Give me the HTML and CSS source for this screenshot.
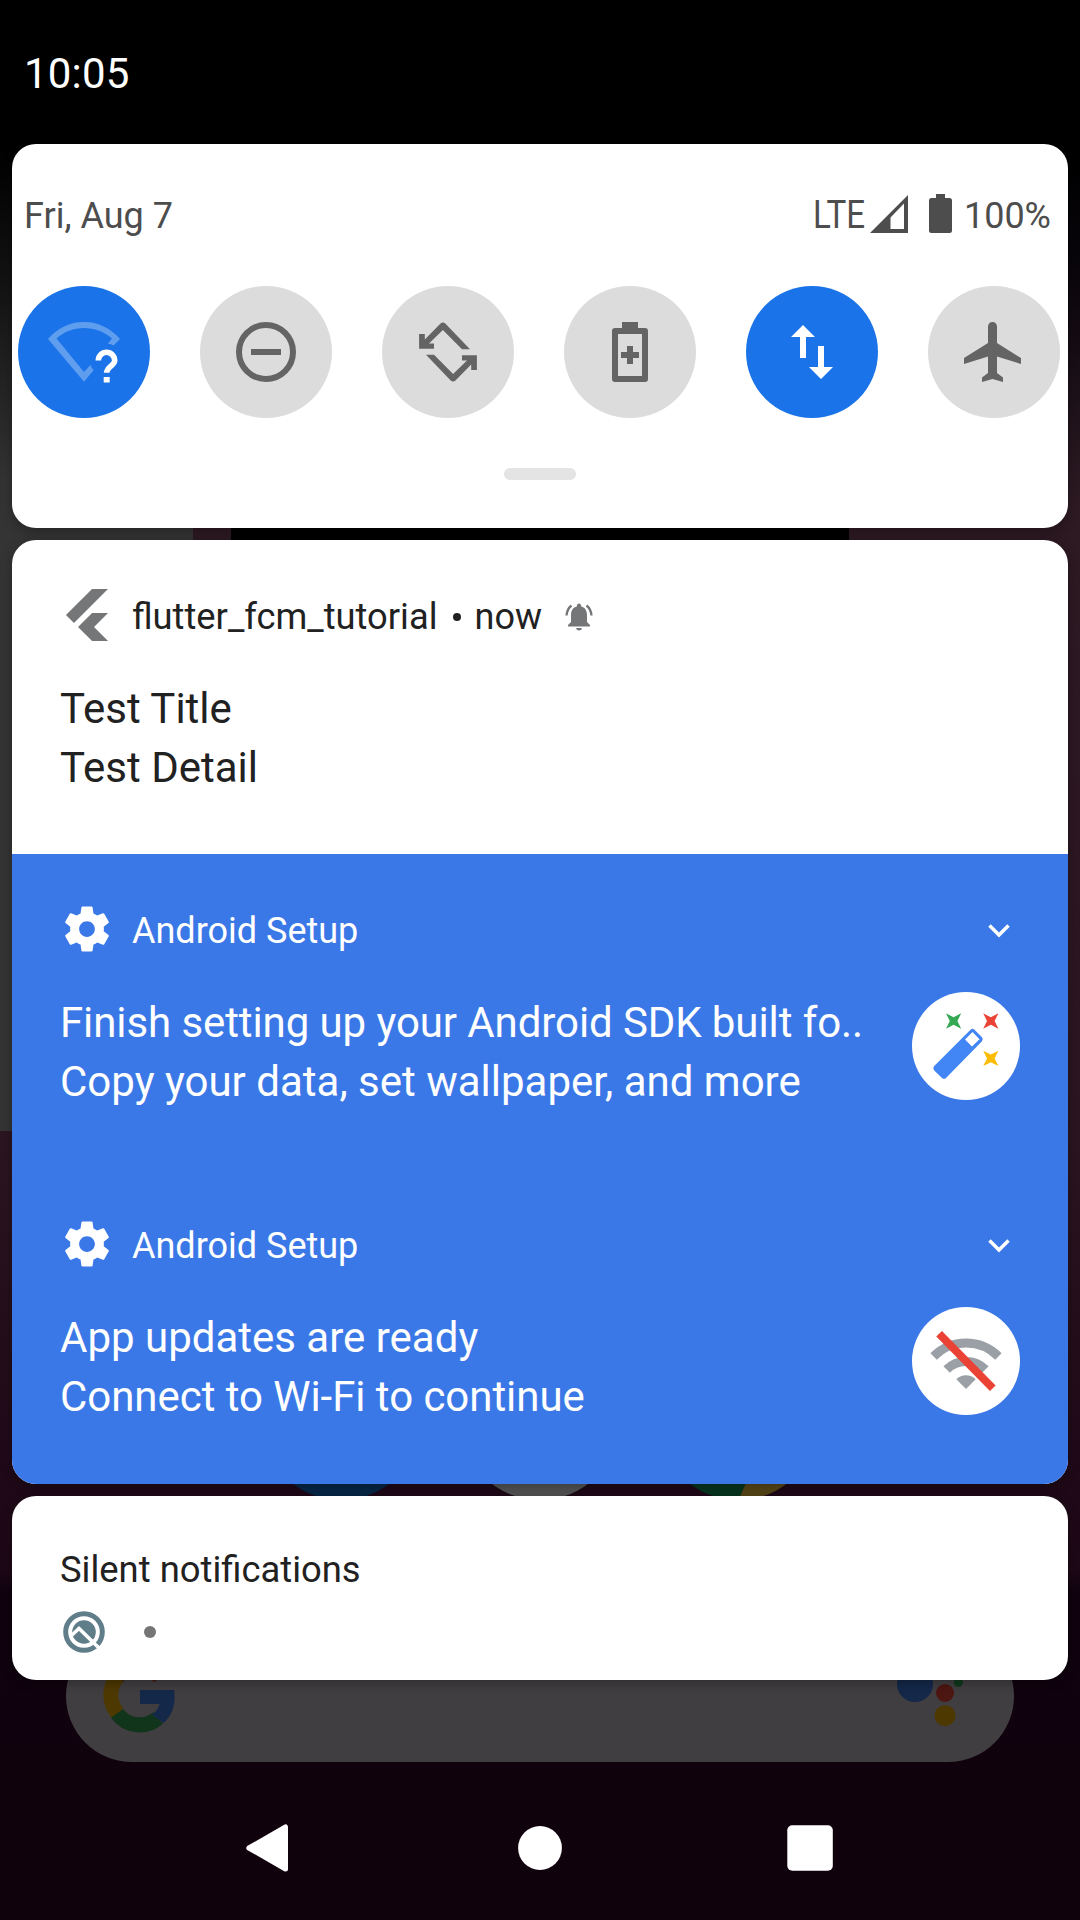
FILE: index.html
```
<!DOCTYPE html>
<html lang="en">
<head>
<meta charset="utf-8">
<title>Notifications</title>
<link rel="stylesheet" href="styles.css">
</head>
<body>
<div class="phone">
  <svg class="wallpaper" viewBox="0 0 1080 1920" aria-hidden="true">
    <defs>
      <linearGradient id="night" x1="0" y1="0" x2="0" y2="1920" gradientUnits="userSpaceOnUse">
        <stop offset="0.075" stop-color="#000"/>
        <stop offset="0.135" stop-color="#08050a"/>
        <stop offset="0.26" stop-color="#2d1a23"/>
        <stop offset="0.59" stop-color="#2b1520"/>
        <stop offset="0.77" stop-color="#1f0918"/>
        <stop offset="0.818" stop-color="#1d0816"/>
        <stop offset="0.83" stop-color="#10030f"/>
        <stop offset="1" stop-color="#0f020c"/>
      </linearGradient>
      <linearGradient id="panel" x1="0" y1="144" x2="0" y2="540" gradientUnits="userSpaceOnUse">
        <stop offset="0" stop-color="#000"/>
        <stop offset="0.35" stop-color="#131313"/>
        <stop offset="0.85" stop-color="#333"/>
        <stop offset="1" stop-color="#343434"/>
      </linearGradient>
    </defs>
    <rect width="1080" height="1920" fill="url(#night)"/>
    <rect y="144" width="193" height="987" fill="url(#panel)"/>
    <rect x="231" y="144" width="618" height="987" fill="#000"/>
    <circle cx="341" cy="1420" r="80" fill="#082748"/>
    <circle cx="540" cy="1420" r="80" fill="#545454"/>
    <circle cx="738" cy="1420" r="80" fill="#063620"/>
    <path d="M745.6 1484L738.5 1500A80 80 0 0 0 790 1481Z" fill="#594719"/>
    <rect x="66" y="1630" width="948" height="132" rx="66" fill="#413e41"/>
    <g fill="none" stroke-width="15">
      <path d="M117.2 1676.5A28 28 0 0 1 160 1677.5" stroke="#4c1611"/>
      <path d="M117.8 1713.5A28 28 0 0 1 117.8 1676.5" stroke="#4d3900"/>
      <path d="M158 1718A28 28 0 0 1 117 1713.3" stroke="#11351b"/>
    </g>
    <path d="M140 1690H174C176 1703 173 1715 163.5 1723L152 1714.5Q158 1710.500 159.500 1704H140Z" fill="#14284a"/>
    <circle cx="915" cy="1684" r="18" fill="#14284a"/>
    <circle cx="945" cy="1693" r="9" fill="#4d1611"/>
    <circle cx="945" cy="1715.700" r="10.500" fill="#4d3900"/>
    <circle cx="958.400" cy="1682.500" r="4.500" fill="#10381c"/>
  </svg>

  <header class="status-bar"><time>10:05</time></header>

  <main class="shade">
    <section class="card quick-settings">
      <div class="info-row">
        <span class="date">Fri, Aug 7</span>
        <span class="system-icons">
          <svg class="lte" viewBox="0 0 56 48"><text x="2" y="36" textLength="52" lengthAdjust="spacingAndGlyphs">LTE</text></svg>
          <svg class="signal" viewBox="0 0 38 38"><path fill-rule="evenodd" d="M0 38L38 0V38ZM20.500 22.500V34H34V8.500Z"/></svg>
          <svg class="battery" viewBox="0 0 23 39"><path d="M7 0H16V4H20.500Q23 4 23 6.500V36.500Q23 39 20.500 39H2.500Q0 39 0 36.500V6.500Q0 4 2.500 4H7Z"/></svg>
          <span class="percent">100%</span>
        </span>
      </div>
      <div class="tiles">
        <div class="tile on"><svg viewBox="0 0 72 72">
          <path opacity=".3" d="M0 23C9.500 12 22 6 36 6S62.500 12 72 23L65.500 29.500Q63 28 59.800 27.800L64 22.500C56 15.500 46.500 12 36 12S16.500 15.500 8.500 22.500L36 56L42.700 48.700Q43 52 45.700 54L36 65.700Z"/>
          <path d="M50.300 44.500A8.200 8.200 0 0 1 66.700 44.500C66.700 49.500 58.700 51 58.700 56.700" fill="none" stroke="#fff" stroke-width="5.600"/><rect x="55.700" y="61" width="6" height="5.500"/>
        </svg></div>
        <div class="tile"><svg viewBox="0 0 24 24"><circle cx="12" cy="12" r="9" fill="none" stroke="#646464" stroke-width="2"/><path d="M7 11h10v2H7z"/></svg></div>
        <div class="tile"><svg viewBox="0 0 72 72"><path id="turn" d="M28.500 7.600Q30.900 5.400 33.300 7.600L58 33.300H50L30.900 14L17 27.500H22V32.700H7.100V18H12.800V23.500Z"/><use href="#turn" transform="rotate(180 36 36)"/></svg></div>
        <div class="tile"><svg viewBox="0 0 72 72"><path fill-rule="evenodd" d="M28 6H44V12H51Q54 12 54 15V63Q54 66 51 66H21Q18 66 18 63V15Q18 12 21 12H28ZM24 18V60H48V18ZM33 30H39V36H45V42H39V48H33V42H27V36H33Z"/></svg></div>
        <div class="tile on"><svg viewBox="0 0 72 72"><path id="arrow" d="M27 9L39 21H30V42H24V21H15Z"/><use href="#arrow" transform="rotate(180 36 36)"/></svg></div>
        <div class="tile"><svg viewBox="0 0 24 24"><path d="M21 16v-2l-8-5V3.500C13 2.670 12.330 2 11.500 2S10 2.670 10 3.500V9l-8 5v2l8-2.500V19l-2 1.500V22l3.500-1 3.500 1v-1.500L13 19v-5.500l8 2.500z"/></svg></div>
      </div>
      <div class="handle"></div>
    </section>

    <section class="card notifications">
      <article class="notification">
        <div class="app-line">
          <svg class="app-icon flutter" viewBox="0 0 24 24"><path d="M14.314 0L2.300 12 6 15.700 21.684.013h-7.357zM14.328 11.072L7.857 17.530l6.470 6.470H21.700l-6.460-6.468 6.460-6.460h-7.370z"/></svg>
          <span class="app-name wide">flutter_fcm_tutorial</span>
          <span class="dot"></span>
          <span class="when">now</span>
          <svg class="bell" viewBox="0 0 28 28"><path d="M14 .5Q16.200.5 16.200 3.500C20.500 4.500 22 8 22 12.500V19L25 22V23.500H3V22L6 19V12.500C6 8 7.500 4.500 11.800 3.500Q11.800.5 14 .5ZM11 25H17Q16.500 27.500 14 27.500T11 25Z"/><path d="M6.500 2.500Q2 6 1.500 12.500M21.500 2.500Q26 6 26.500 12.500" fill="none" stroke="#757678" stroke-width="2.300"/></svg>
        </div>
        <div class="body-line"><div class="message"><p>Test Title</p><p>Test Detail</p></div></div>
      </article>

      <article class="notification setup">
        <div class="app-line">
          <svg class="app-icon" viewBox="0 0 24 24"><path id="gear" d="M19.430 12.980c.04-.32.07-.64.07-.98s-.03-.66-.07-.98l2.110-1.650c.19-.15.24-.42.12-.64l-2-3.460c-.12-.22-.39-.3-.61-.22l-2.490 1c-.52-.4-1.080-.73-1.690-.98l-.38-2.650C14.460 2.180 14.250 2 14 2h-4c-.25 0-.46.18-.49.42l-.38 2.650c-.61.25-1.170.59-1.690.98l-2.490-1c-.23-.09-.49 0-.61.22l-2 3.460c-.13.22-.07.49.12.64l2.110 1.650c-.04.32-.07.65-.07.98s.03.66.07.98l-2.110 1.650c-.19.15-.24.42-.12.64l2 3.460c.12.22.39.3.61.22l2.490-1c.52.4 1.080.73 1.690.98l.38 2.650c.03.24.24.42.49.42h4c.25 0 .46-.18.49-.42l.38-2.650c.61-.25 1.170-.59 1.690-.98l2.490 1c.23.09.49 0 .61-.22l2-3.460c.12-.22.07-.49-.12-.64l-2.110-1.650zM12 15.500c-1.930 0-3.500-1.570-3.500-3.500s1.570-3.500 3.500-3.500 3.500 1.570 3.500 3.500-1.570 3.500-3.500 3.500z"/></svg>
          <span class="app-name">Android Setup</span>
          <svg class="chevron" viewBox="0 0 22 14"><path d="M1.500 1.500L11 11L20.500 1.500"/></svg>
        </div>
        <div class="body-line">
          <div class="message"><p class="clipped">Finish setting up your Android SDK built fo..</p><p>Copy your data, set wallpaper, and more</p></div>
          <svg class="badge" viewBox="0 0 108 108"><circle cx="54" cy="54" r="54" fill="#fff"/>
            <path id="spark" d="M34 21.300L41.600 25.200L49.200 21.300L45.400 29L49.200 36.700L41.600 32.800L34 36.700L37.800 29Z" fill="#34a853"/>
            <path d="M71.200 21.300L78.800 25.200L86.400 21.300L82.600 29L86.400 36.700L78.800 32.800L71.200 36.700L75 29Z" fill="#ea4335"/>
            <path d="M71.200 58.700L78.800 62.600L86.400 58.700L82.600 66.400L86.400 74.100L78.800 70.200L71.200 74.100L75 66.400Z" fill="#fbbc04"/>
            <path fill-rule="evenodd" fill="#4285f4" d="M58.500 37.700Q60.500 36 62.500 37.700L70 45.300Q71.700 47.300 70 49.300L34 86Q32 87.700 30 86L22 78.300Q20.300 76.300 22 74.300ZM60.500 40L53 47.500L60 54.500L67.500 47.300Z"/>
          </svg>
        </div>
      </article>

      <article class="notification setup">
        <div class="app-line">
          <svg class="app-icon" viewBox="0 0 24 24"><use href="#gear"/></svg>
          <span class="app-name">Android Setup</span>
          <svg class="chevron" viewBox="0 0 22 14"><path d="M1.500 1.500L11 11L20.500 1.500"/></svg>
        </div>
        <div class="body-line">
          <div class="message"><p>App updates are ready</p><p class="tight">Connect to Wi-Fi to continue</p></div>
          <svg class="badge" viewBox="0 0 108 108"><circle cx="54" cy="54" r="54" fill="#fff"/>
            <g fill="none" stroke="#9aa0a6" stroke-width="9"><path d="M21.600 49.500A45.800 45.800 0 0 1 86.400 49.500M34.600 62.500A27.400 27.400 0 0 1 73.400 62.500"/></g>
            <path d="M54 82L44.300 72.200A13.700 13.700 0 0 1 63.700 72.200Z" fill="#9aa0a6"/>
            <path d="M27.100 26.700L80.800 81.300" stroke="#ea4335" stroke-width="8"/>
          </svg>
        </div>
      </article>
    </section>

    <section class="card silent">
      <h2>Silent notifications</h2>
      <div class="silent-icons">
        <svg class="q-icon" viewBox="9 9 42 42"><circle cx="30" cy="30" r="18.300" fill="none" stroke="#607d8a" stroke-width="5"/><circle cx="30" cy="30" r="11.800" fill="#607d8a"/><path d="M18 33L25 26.500L46 47" fill="none" stroke="#fff" stroke-width="3.500"/></svg>
        <span class="more"></span>
      </div>
    </section>
  </main>

  <nav class="nav-bar">
    <svg viewBox="0 0 48 48"><path d="M39.500 2.900V45.100L2.800 24Z" stroke-width="5"/></svg>
    <svg viewBox="0 0 48 48"><circle cx="24" cy="24" r="21.900"/></svg>
    <svg viewBox="0 0 48 48"><rect x="1.300" y="1.300" width="45.500" height="45.500" rx="5"/></svg>
  </nav>
</div>
</body>
</html>
```
FILE: styles.css
```
* { box-sizing: border-box; }
body { margin: 0; background: #000; font-family: Roboto, "Noto Sans", sans-serif; }
h2, p { margin: 0; font-weight: 400; }
svg { display: block; flex: none; }

.phone { position: relative; width: 1080px; height: 1920px; overflow: hidden; display: flex; flex-direction: column; }
.wallpaper { position: absolute; inset: 0; width: 1080px; height: 1920px; }

.status-bar { position: relative; height: 144px; padding: 49px 24px 0; color: #fff; font-size: 42px; line-height: 50px; letter-spacing: .2px; }

.shade { position: relative; display: flex; flex-direction: column; gap: 12px; padding: 0 12px; }
.card { border-radius: 24px; background: #fff; overflow: hidden; box-shadow: 0 3px 12px rgba(0, 0, 0, .3); }

.quick-settings { height: 384px; padding-top: 48px; }
.info-row { display: flex; justify-content: space-between; height: 48px; padding: 0 17px 0 12px; color: #4d4d4d; font-size: 36px; line-height: 48px; }
.system-icons { display: flex; align-items: center; }
.system-icons svg { fill: #4d4d4d; }
.lte { width: 56px; height: 48px; font-size: 38px; margin-right: 3px; }
.signal { width: 38px; height: 38px; margin: -5px 21px 0 0; }
.battery { width: 23px; height: 39px; margin: -5px 12px 0 0; }
.tiles { display: flex; gap: 50px; margin-top: 46px; padding-left: 6px; }
.tile { flex: none; display: flex; align-items: center; justify-content: center; width: 132px; height: 132px; border-radius: 50%; background: #dcdcdc; }
.tile svg { width: 72px; height: 72px; fill: #646464; }
.tile.on { background: #1a73e8; }
.tile.on svg { fill: #fff; }
.handle { width: 72px; height: 12px; margin: 50px auto 0; border-radius: 6px; background: #e4e4e4; }

.notifications { height: 944px; }
.notification { height: 314px; padding: 48px 48px 0; color: #212121; }
.notification.setup { height: 315px; color: #fff; background: #3b78e7; }
.app-line { display: flex; align-items: center; height: 54px; font-size: 36px; line-height: 44px; }
.app-icon { width: 54px; height: 54px; margin-right: 18px; fill: #fff; }
.app-icon.flutter { height: 52px; fill: #757678; }
.app-name, .when { padding-top: 3px; }
.app-name.wide { font-size: 36.3px; }
.dot { width: 8px; height: 8px; margin: 3px 14px 0 15px; border-radius: 50%; background: #212121; }
.bell { width: 28px; height: 28px; margin: 3px 0 0 23px; fill: #757678; }
.chevron { width: 22px; height: 14px; margin: 3px 10px 0 auto; fill: none; stroke: #fff; stroke-width: 3.5; }
.body-line { display: flex; justify-content: space-between; padding-top: 36px; font-size: 42px; line-height: 59px; white-space: nowrap; }
.message { padding-top: 1px; }
.clipped { letter-spacing: -.09px; }
.tight { letter-spacing: -.05px; }
.badge { width: 108px; height: 108px; }

.silent { height: 184px; padding: 52px 48px 0; color: #212121; }
.silent h2 { font-size: 36.4px; line-height: 44px; }
.silent-icons { display: flex; align-items: center; gap: 39px; margin: 19px 0 0 3px; }
.q-icon { width: 42px; height: 42px; }
.more { width: 12px; height: 12px; border-radius: 50%; background: #757575; }

.nav-bar { position: relative; display: flex; justify-content: center; gap: 222px; margin-top: 144px; }
.nav-bar svg { width: 48px; height: 48px; fill: #fff; stroke: #fff; stroke-width: 0; stroke-linejoin: round; }
```
